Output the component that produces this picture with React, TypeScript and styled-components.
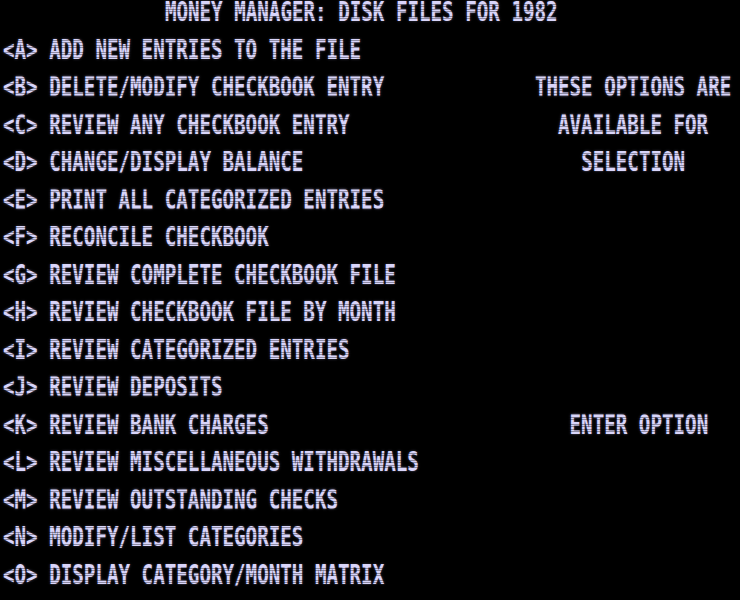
import type { FC, ReactNode } from "react";
import styled, { createGlobalStyle } from "styled-components";

// 64 x 16 character terminal, cell size fills the 740x600 window
const COLS = 64;
const CELL_W = 740 / COLS;
const ROW_H = 37.5;

interface Piece {
  col: number;
  text: string;
}

const rows: Piece[][] = [
  [{ col: 14, text: "MONEY MANAGER: DISK FILES FOR 1982" }],
  [{ col: 0, text: "<A> ADD NEW ENTRIES TO THE FILE" }],
  [
    { col: 0, text: "<B> DELETE/MODIFY CHECKBOOK ENTRY" },
    { col: 46, text: "THESE OPTIONS ARE" },
  ],
  [
    { col: 0, text: "<C> REVIEW ANY CHECKBOOK ENTRY" },
    { col: 48, text: "AVAILABLE FOR" },
  ],
  [
    { col: 0, text: "<D> CHANGE/DISPLAY BALANCE" },
    { col: 50, text: "SELECTION" },
  ],
  [{ col: 0, text: "<E> PRINT ALL CATEGORIZED ENTRIES" }],
  [{ col: 0, text: "<F> RECONCILE CHECKBOOK" }],
  [{ col: 0, text: "<G> REVIEW COMPLETE CHECKBOOK FILE" }],
  [{ col: 0, text: "<H> REVIEW CHECKBOOK FILE BY MONTH" }],
  [{ col: 0, text: "<I> REVIEW CATEGORIZED ENTRIES" }],
  [{ col: 0, text: "<J> REVIEW DEPOSITS" }],
  [
    { col: 0, text: "<K> REVIEW BANK CHARGES" },
    { col: 49, text: "ENTER OPTION" },
  ],
  [{ col: 0, text: "<L> REVIEW MISCELLANEOUS WITHDRAWALS" }],
  [{ col: 0, text: "<M> REVIEW OUTSTANDING CHECKS" }],
  [{ col: 0, text: "<N> MODIFY/LIST CATEGORIES" }],
  [{ col: 0, text: "<O> DISPLAY CATEGORY/MONTH MATRIX" }],
];

const Screen: FC<{ children?: ReactNode }> = ({ children }) => (
  <>
    <GlobalStyle />
    <ScreenBox>{children}</ScreenBox>
  </>
);

const App: FC = () => {
  return (
    <Screen>
      {rows.map((pieces, i) => (
        <Row key={i}>
          {pieces.map((p, j) => (
            <Text key={j} $col={p.col} $len={p.text.length}>
              {p.text}
            </Text>
          ))}
        </Row>
      ))}
      <Scanlines />
    </Screen>
  );
};

export default App;

const GlobalStyle = createGlobalStyle`
  html, body {
    margin: 0;
    background: #000;
  }
`;

const ScreenBox = styled.div`
  position: relative;
  width: 740px;
  height: 600px;
  overflow: hidden;
  background: #000;
  display: grid;
  grid-template-rows: repeat(16, ${ROW_H}px);
`;

const Row = styled.div`
  display: grid;
  grid-template-columns: repeat(${COLS}, ${CELL_W}px);
  align-items: start;
  padding-left: 3px;
`;

const Text = styled.span<{ $col: number; $len: number }>`
  grid-column: ${(p) => p.$col + 1} / span ${(p) => p.$len};
  display: block;
  font-family: "DejaVu Sans Mono", "Liberation Mono", monospace;
  font-weight: bold;
  font-size: ${CELL_W / 0.602}px;
  line-height: 17px;
  white-space: pre;
  color: #d9d5fa;
  text-shadow: 0 0 2px rgba(200, 195, 255, 0.45);
  transform: scaleY(1.42);
  transform-origin: 0 0;
`;

const Scanlines = styled.div`
  position: absolute;
  inset: 0;
  pointer-events: none;
  background: repeating-linear-gradient(
    to bottom,
    transparent 0,
    transparent 1.6px,
    rgba(0, 0, 0, 0.35) 1.6px,
    rgba(0, 0, 0, 0.35) 2.4px
  );
`;
